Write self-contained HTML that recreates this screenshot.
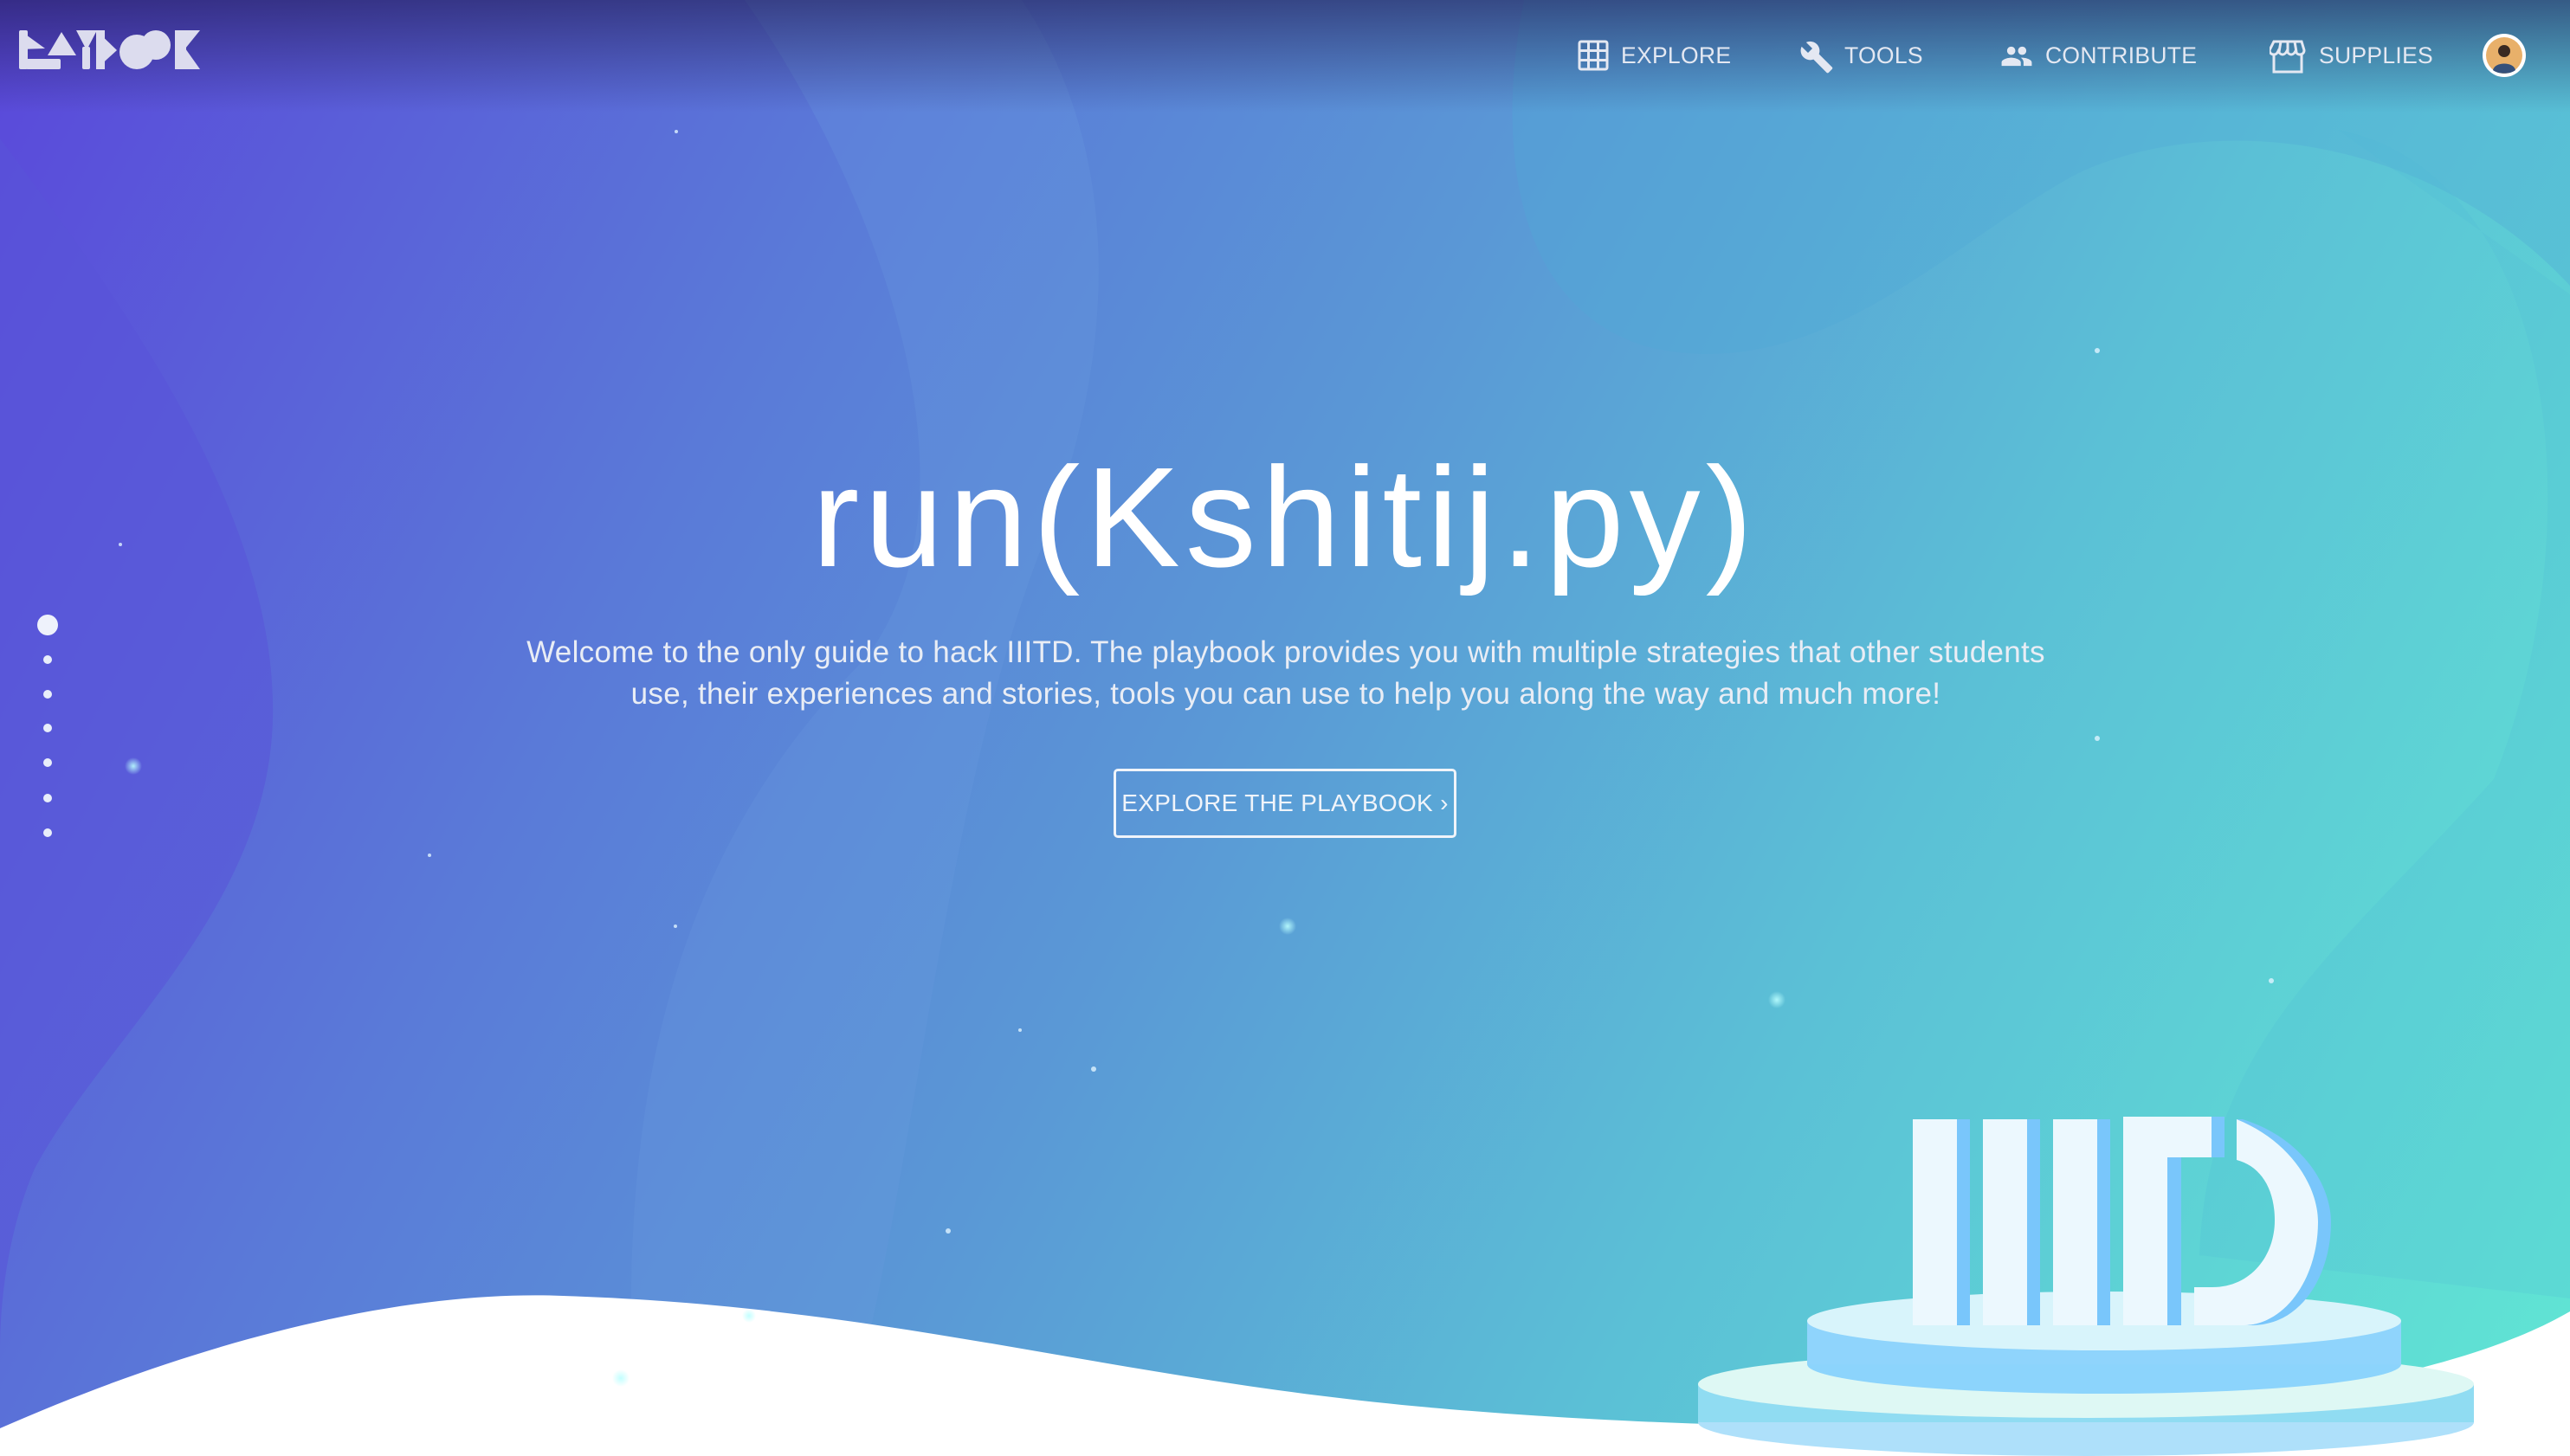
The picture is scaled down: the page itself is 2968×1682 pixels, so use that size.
<!DOCTYPE html>
<html><head><meta charset="utf-8">
<style>
*{margin:0;padding:0;box-sizing:border-box}
html,body{width:2968px;height:1682px;overflow:hidden}
body{position:relative;font-family:"Liberation Sans",sans-serif;background:linear-gradient(118deg,#5a48da 0%,#5a7ad8 28%,#5a98d6 48%,#5bc0d6 70%,#60e6d4 100%)}
#bg{position:absolute;left:0;top:0;display:block}
.nav{position:absolute;top:0;left:0;width:2968px;height:130px;background:linear-gradient(180deg,rgba(30,25,80,.6),rgba(30,25,80,0))}
.ni{position:absolute;top:44px;height:40px;color:#e4e8f2;font-size:26.5px;line-height:40px;letter-spacing:.3px}
.ni svg{position:absolute;left:0;top:2px}
h1{position:absolute;left:0;width:2968px;top:488px;text-align:center;color:#fff;font-weight:normal;font-size:164px;letter-spacing:6px;line-height:220px}
.p{position:absolute;left:460px;width:2050px;top:730px;text-align:center;color:#e9edf5;font-size:35px;line-height:48px;letter-spacing:.3px}
.btn{position:absolute;left:1286px;top:888px;width:396px;height:80px;border:3px solid #f0f4fa;border-radius:5px;color:#f0f4fa;font-size:28px;text-align:center;line-height:74px;letter-spacing:.3px}
.dot{position:absolute;left:50px;width:10px;height:10px;border-radius:50%;background:#e8eefa}
</style></head><body>
<svg id="bg" width="2968" height="1682" viewBox="0 0 2968 1682">
<defs>
<radialGradient id="sp"><stop offset="0" stop-color="#bff" stop-opacity=".9"/><stop offset="1" stop-color="#bff" stop-opacity="0"/></radialGradient>
</defs>
<path d="M0 160 C150 360 320 600 315 830 C310 1050 120 1200 40 1350 C10 1420 0 1500 0 1560 Z" fill="#5a54d8" opacity=".55"/>
<path d="M860 0 L1180 0 C1300 180 1290 420 1200 640 C1100 900 1060 1300 1000 1560 L730 1600 C720 1300 760 1000 1000 760 C1150 560 1000 200 860 0 Z" fill="#6a9ae0" opacity=".25"/>
<path d="M1760 0 L2968 0 L2968 330 C2800 150 2550 130 2400 200 C2250 280 2100 450 1900 400 C1740 350 1730 150 1760 0 Z" fill="#4fa8d8" opacity=".35"/>
<path d="M2700 150 C2950 200 3000 600 2880 900 C2700 1100 2550 1200 2540 1450 L2968 1500 L2968 340 Z" fill="#50b8d6" opacity=".2"/>
<path d="M0 1650 C250 1540 480 1490 650 1497 C1050 1510 1300 1600 1700 1630 C1950 1650 2300 1660 2600 1620 C2780 1590 2890 1560 2968 1515 L2968 1682 L0 1682 Z" fill="#ffffff"/>
<circle cx="154" cy="885" r="10" fill="url(#sp)"/><circle cx="1487" cy="1070" r="10" fill="url(#sp)"/>
<circle cx="2052" cy="1155" r="10" fill="url(#sp)"/><circle cx="717" cy="1592" r="10" fill="url(#sp)"/>
<circle cx="865" cy="1520" r="8" fill="url(#sp)"/>
<g fill="#e0f4ff" opacity=".8"><circle cx="781" cy="152" r="2"/><circle cx="2422" cy="405" r="3"/><circle cx="2422" cy="853" r="3"/><circle cx="2623" cy="1133" r="3"/><circle cx="1263" cy="1235" r="3"/><circle cx="1095" cy="1422" r="3"/><circle cx="496" cy="988" r="2"/><circle cx="780" cy="1070" r="2"/><circle cx="1178" cy="1190" r="2"/><circle cx="139" cy="629" r="2"/></g>
<ellipse cx="2409" cy="1643" rx="448" ry="39" fill="#aee0fa"/>
<rect x="1961" y="1599" width="896" height="44" fill="#90dcf2"/>
<ellipse cx="2409" cy="1599" rx="448" ry="39" fill="#def8f4"/>
<ellipse cx="2430" cy="1576" rx="343" ry="34" fill="#8cd4fc"/>
<rect x="2087" y="1526" width="686" height="50" fill="#8fd4fc"/>
<ellipse cx="2430" cy="1526" rx="343" ry="34" fill="#d8f4fb"/>
<g fill="#79c6fb">
<rect x="2260" y="1293" width="15" height="238"/><rect x="2341" y="1293" width="15" height="238"/><rect x="2422" y="1293" width="15" height="238"/><rect x="2503" y="1337" width="16" height="194"/><rect x="2554" y="1290" width="15" height="47"/>
<path d="M2590 1293 C2660 1315 2692 1370 2692 1412 C2692 1470 2660 1531 2600 1531 L2590 1531 C2640 1531 2677 1475 2677 1412 C2677 1370 2645 1318 2583 1293 Z"/>
</g>
<g fill="#ecf8fe">
<rect x="2209" y="1293" width="51" height="238"/><rect x="2290" y="1293" width="51" height="238"/><rect x="2371" y="1293" width="51" height="238"/>
<path d="M2452 1290 L2554 1290 L2554 1337 L2503 1337 L2503 1531 L2452 1531 Z"/>
<path d="M2583 1293 C2645 1318 2677 1370 2677 1412 C2677 1475 2640 1531 2590 1531 L2534 1531 L2534 1487 L2555 1487 C2600 1487 2627 1450 2627 1410 C2627 1372 2610 1347 2583 1340 Z"/>
</g>
</svg>
<div class="nav"></div>
<svg style="position:absolute;left:22px;top:33px" width="212" height="50" viewBox="22 33 212 50" fill="#dcdcee">
<rect x="22" y="35" width="10" height="45" rx="2"/><path d="M23 35 L52 56 L23 57 Z"/>
<rect x="30" y="68" width="40" height="12" rx="2"/><path d="M55 64 L71 37 L88 64 Z"/>
<path d="M88 35 L112 35 L100 58 Z"/><rect x="95" y="54" width="9" height="26" rx="2"/>
<rect x="111" y="35" width="10" height="45"/><path d="M111 35 L135 58 L111 80 Z"/>
<circle cx="158" cy="60" r="20"/><circle cx="180" cy="52" r="17"/>
<rect x="202" y="35" width="13" height="45"/><path d="M214 35 L231 35 L214 56 L231 80 L214 80 Z"/>
</svg>
<div class="ni" style="left:1822px"><svg width="36" height="36" viewBox="0 0 36 36" fill="none" stroke="#e4e8f2" stroke-width="3"><rect x="2" y="2" width="32" height="32" rx="2"/><path d="M12.5 2v32M23.5 2v32M2 12.5h32M2 23.5h32"/></svg><span style="position:absolute;left:50px">EXPLORE</span></div>
<div class="ni" style="left:2078px"><svg width="40" height="40" viewBox="0 0 24 24" fill="#e4e8f2"><path d="M22.7 19l-9.1-9.1c.9-2.3.4-5-1.5-6.9-2-2-5-2.4-7.4-1.3L9 6 6 9 1.6 4.7C.4 7.1.9 10.1 2.9 12.1c1.9 1.9 4.6 2.4 6.9 1.5l9.1 9.1c.4.4 1 .4 1.4 0l2.3-2.3c.5-.4.5-1.1.1-1.4z"/></svg><span style="position:absolute;left:52px">TOOLS</span></div>
<div class="ni" style="left:2310px"><svg width="38" height="38" viewBox="0 0 24 24" fill="#e4e8f2"><path d="M16 11c1.7 0 3-1.3 3-3s-1.3-3-3-3-3 1.3-3 3 1.3 3 3 3zm-8 0c1.7 0 3-1.3 3-3S9.7 5 8 5 5 6.3 5 8s1.3 3 3 3zm0 2c-2.3 0-7 1.2-7 3.5V19h14v-2.5C15 14.2 10.3 13 8 13zm8 0c-.3 0-.6 0-1 .1 1.2.8 2 1.9 2 3.4V19h6v-2.5c0-2.3-4.7-3.5-7-3.5z"/></svg><span style="position:absolute;left:52px">CONTRIBUTE</span></div>
<div class="ni" style="left:2621px"><svg width="42" height="40" viewBox="0 0 42 40" fill="none" stroke="#e4e8f2" stroke-width="3"><path d="M5 2h32l3 10c0 3-2 5-5 5s-4-2-5-4c-1 2-3 4-5 4s-4-2-5-4c-1 2-3 4-5 4s-4-2-5-4c-1 2-2 4-5 4s-5-2-5-5z"/><path d="M5 17v20h32V17M13 2l-2 12M21 2v12M29 2l2 12"/></svg><span style="position:absolute;left:57px">SUPPLIES</span></div>
<svg style="position:absolute;left:2867px;top:39px" width="50" height="50" viewBox="0 0 50 50"><circle cx="25" cy="25" r="25" fill="#fff"/><circle cx="25" cy="25" r="21" fill="#e8b06a"/><circle cx="25" cy="20" r="7" fill="#3a2a22"/><path d="M12 42 C14 32 36 32 38 42 C32 47 18 47 12 42Z" fill="#34507a"/></svg>
<h1>run(Kshitij.py)</h1>
<div class="p">Welcome to the only guide to hack IIITD. The playbook provides you with multiple strategies that other students<br>use, their experiences and stories, tools you can use to help you along the way and much more!</div>
<div class="btn">EXPLORE THE PLAYBOOK ›</div>
<div class="dot" style="left:43px;top:710px;width:24px;height:24px;background:#eef2fb"></div>
<div class="dot" style="top:757px"></div><div class="dot" style="top:797px"></div><div class="dot" style="top:836px"></div><div class="dot" style="top:876px"></div><div class="dot" style="top:917px"></div><div class="dot" style="top:957px"></div>
</body></html>
